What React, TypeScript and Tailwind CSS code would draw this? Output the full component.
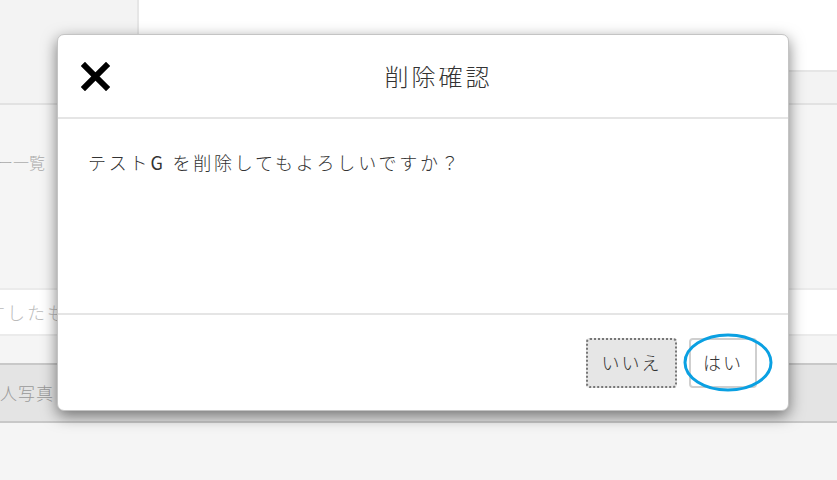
import type { ReactNode } from "react";

/** 背景の画面（モーダルの下にある一覧ページ）。 */
function Fondo() {
  return (
    <div className="flex h-[480px] w-[837px] flex-col overflow-hidden bg-[#f5f5f5]">
      <div className="flex h-[105px] shrink-0 border-b-2 border-[#e2e2e2]">
        <div className="w-[139px] shrink-0 border-r-2 border-[#e6e6e6] bg-[#f3f3f3]" />
        <div className="flex flex-1 flex-col bg-white">
          <div className="h-[70px]" />
          <div className="flex-1 border-t-2 border-[#e6e6e6] bg-[#f3f3f3]" />
        </div>
      </div>
      <div className="flex h-[258px] shrink-0 flex-col">
        <p className="ml-[-3px] mt-[46px] text-[16px] leading-[22px] font-light text-[#aaa]">ー一覧</p>
        <div className="mt-[115px] flex h-[48px] items-center border-y-2 border-[#ebebeb] bg-white">
          <span className="ml-[-13px] text-[18px] font-light tracking-[2px] text-[#bbb]">すしたもの</span>
        </div>
      </div>
      <div className="flex h-[60px] shrink-0 items-center border-y-2 border-[#c8c8c8] bg-[#e4e4e4]">
        <span className="ml-[-18px] text-[17px] font-light tracking-[1px] text-[#999]">個人写真</span>
      </div>
    </div>
  );
}

function IconoCerrar() {
  return (
    <svg width="29" height="29" viewBox="0 0 29 29" aria-hidden>
      <path d="M4 4 L25 25 M25 4 L4 25" stroke="#000" strokeWidth="6" strokeLinecap="square" />
    </svg>
  );
}

function Boton({ children, className = "" }: { children: ReactNode; className?: string }) {
  return (
    <button className={"h-[50px] rounded-[4px] text-[18px] font-light tracking-[2px] text-[#333] " + className}>
      {children}
    </button>
  );
}

export default function App() {
  return (
    <div className="relative h-[480px] w-[837px] overflow-hidden font-['Noto_Sans_CJK_JP',sans-serif]">
      <Fondo />
      <div className="absolute left-[57px] top-[34px] flex h-[377px] w-[732px] flex-col rounded-[7px] border border-[#c4c4c4] bg-white shadow-[0_5px_15px_rgba(0,0,0,0.5)]">
        <div className="flex h-[84px] shrink-0 items-center border-b-2 border-[#e5e5e5] px-[23px]">
          <IconoCerrar />
          <h2 className="flex-1 pl-[2px] text-center text-[24px] font-light tracking-[3px] text-[#333]">削除確認</h2>
        </div>
        <div className="h-[196px] shrink-0 border-b-2 border-[#e5e5e5] px-[30px] pt-[31px]">
          <p className="text-[18px] leading-[25px] font-light tracking-[2.8px] text-[#333]">
            テスト<span className="font-normal">G</span> を削除してもよろしいですか？
          </p>
        </div>
        <div className="relative flex flex-1 items-center justify-end gap-[12px] pr-[31px]">
          <Boton className="w-[91px] border-2 border-dotted border-[#777] bg-[#e6e6e6]">いいえ</Boton>
          <Boton className="w-[68px] border-2 border-[#cfcfcf] bg-white">はい</Boton>
          <svg
            className="absolute left-[625px] top-[18px]"
            width="90"
            height="59"
            viewBox="0 0 90 59"
            aria-hidden
          >
            <ellipse cx="45" cy="29.5" rx="43" ry="27.5" fill="none" stroke="#0aa0e2" strokeWidth="3" />
          </svg>
        </div>
      </div>
    </div>
  );
}
